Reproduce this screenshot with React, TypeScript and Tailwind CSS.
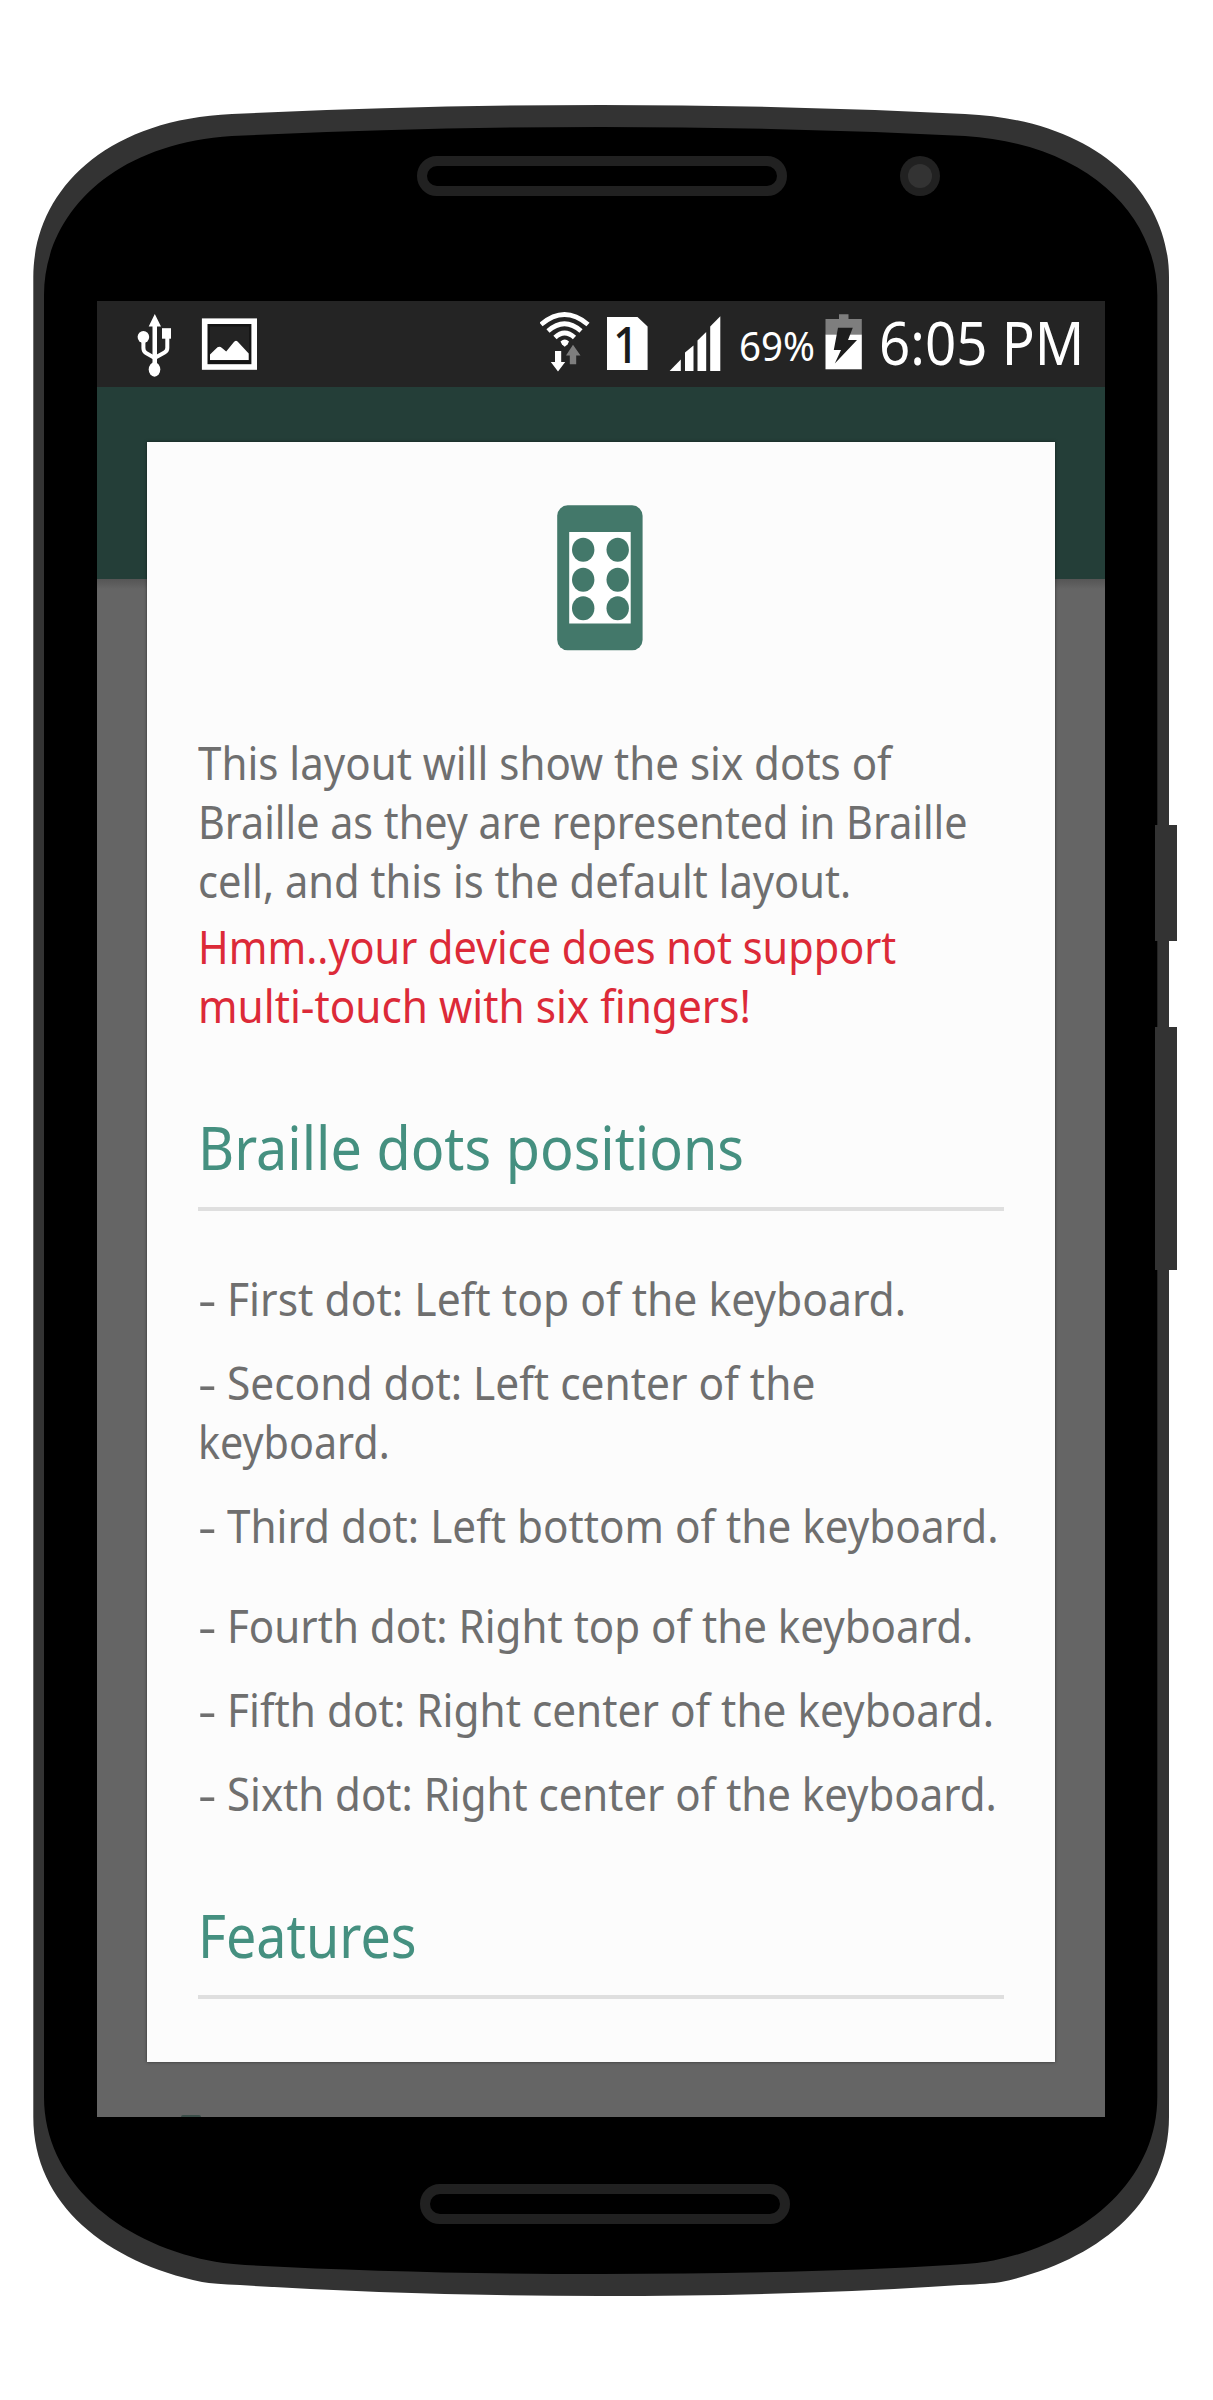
import { useLayoutEffect, useRef, type ReactNode } from "react";

/** One line of text condensed horizontally to a given width. */
function Line({ width, className = "", children }: { width: number; className?: string; children: ReactNode }) {
  const ref = useRef<HTMLSpanElement>(null);
  useLayoutEffect(() => {
    const el = ref.current;
    if (el) el.style.transform = `scaleX(${width / el.offsetWidth})`;
  }, [width]);
  return (
    <div className={className} style={{ width }}>
      <span ref={ref} className="inline-block origin-left whitespace-nowrap align-top">
        {children}
      </span>
    </div>
  );
}

/** A list line led by a wide dash. */
function Item({ width, className = "", children }: { width: number; className?: string; children: ReactNode }) {
  return (
    <div className={`flex ${className}`}>
      <span className="w-[28.500px] shrink-0">
        <span className="inline-block origin-left scale-x-[1.25] align-top">-</span>
      </span>
      <Line width={width}>{children}</Line>
    </div>
  );
}

function PhoneBody() {
  return (
    <svg className="absolute left-0 top-0" width="1213" height="2400" viewBox="0 0 1213 2400" aria-hidden="true">
      <path
        fill="#333333"
        d="M33.3 277C33.3 195 100 120 232 114Q420 105 601 105Q780 105 965 114C1099 120 1169 195 1169 277V2117C1169 2205 1095 2262 1001 2282Q990 2284 960 2285Q800 2296 601 2296Q410 2296 240 2285Q214 2284 202 2282C107 2262 33.3 2205 33.3 2117Z"
      />
      <path
        fill="#000000"
        d="M44 295C44 218 108 144 232 136Q420 127 601 127Q780 127 965 136C1091 144 1157.300 218 1157.300 295V2097C1157.300 2180 1085 2242 993.500 2260.500Q982 2263 950 2265Q800 2274 601 2274Q410 2274 245 2265Q220 2263 209 2260.500C117 2242 44 2180 44 2097Z"
      />
      <rect x="422" y="161" width="360" height="30" rx="15" fill="none" stroke="#212121" strokeWidth="10" />
      <rect x="425" y="2189" width="360" height="30" rx="15" fill="none" stroke="#212121" strokeWidth="10" />
      <circle cx="920" cy="176" r="20" fill="#212121" />
      <circle cx="920" cy="176" r="12" fill="#333333" />
      <rect x="1155" y="825" width="22" height="116" fill="#333333" />
      <rect x="1155" y="1027" width="22" height="243" fill="#333333" />
    </svg>
  );
}

function UsbIcon() {
  return (
    <svg className="ml-[39px] shrink-0" width="38" height="66" viewBox="136 312 38 66" fill="#fff">
      <path d="M154.800 314L161 326.500H157V364H152.500V326.500H148.700Z" />
      <ellipse cx="154.500" cy="369.500" rx="5.800" ry="7.200" />
      <ellipse cx="143.400" cy="337" rx="5.800" ry="6" />
      <rect x="162" y="328.200" width="9" height="10.500" />
      <path d="M143.400 340V348Q143.400 351.500 146 353L154.700 358L164.500 352.500Q167.300 351 167.300 348V337" fill="none" stroke="#fff" strokeWidth="4" />
    </svg>
  );
}

function PictureIcon() {
  return (
    <svg className="ml-[27px] shrink-0" width="56" height="54" viewBox="201 317 56 54">
      <rect x="204.700" y="321.200" width="49.500" height="45.800" fill="#151515" stroke="#fff" strokeWidth="5.600" />
      <rect x="210" y="326.500" width="39" height="34" fill="#232323" />
      <path d="M210 360V354.500L217.500 347.300Q219.700 345.700 222 348L226.200 351.500L233.500 342.500Q236 339 238.500 342.500L248.700 353.500V360Z" fill="#fff" />
    </svg>
  );
}

function WifiIcon() {
  return (
    <svg className="ml-[283px] shrink-0" width="50" height="62" viewBox="540 311 50 62">
      <g fill="none" stroke="#fff" strokeWidth="4.800">
        <path d="M541 324.500Q564.500 304.500 588 324.500" />
        <path d="M548 331Q564.500 316.500 581 331" />
        <path d="M555 337.500Q564.500 328.500 574.500 337.500" />
      </g>
      <path d="M560.500 341.500Q564.700 337.500 569 341.500L567.500 344.500L564.700 346.800L562 344.500Z" fill="#fff" />
      <path d="M555 351H561.200V362H565.200L558 371.500L550.800 362H555Z" fill="#fff" />
      <path d="M569.800 364.200H576.200V355.500H580.500L573 344.800L566 355.500H569.800Z" fill="#7e7e7e" />
    </svg>
  );
}

function SimIcon() {
  return (
    <div className="relative ml-[17px] h-[53px] w-[41px] shrink-0">
      <svg className="absolute inset-0" width="41" height="53" viewBox="0 0 41 53">
        <path d="M0 0H30.500L40.600 9.500V53H0Z" fill="#fff" />
      </svg>
      <span className="absolute left-[6px] top-0 inline-block origin-left scale-x-[0.9] text-[50px] font-medium leading-[54px] text-[#1b1b1b]">1</span>
    </div>
  );
}

function SignalIcon() {
  return (
    <svg className="ml-[21px] shrink-0" width="52" height="56" viewBox="669 316 52 56" fill="#fff">
      <path d="M669.600 371L680.800 359.500V371Z" />
      <path d="M685 371V352.500L693.500 345.500V371Z" />
      <path d="M697.500 371V340.500L706.200 332V371Z" />
      <path d="M710.200 371V326.500L720.300 316.300V371Z" />
    </svg>
  );
}

function BatteryIcon() {
  return (
    <svg className="ml-[10px] shrink-0" width="38" height="56" viewBox="825 314 38 56">
      <path d="M825.500 319H839V314.300H848.500V319H861.800V335H825.500Z" fill="#7e7e7e" />
      <rect x="825.500" y="334.700" width="36.300" height="34.600" fill="#fff" />
      <path d="M838 327.700H852.800L848 340H857L834.800 363.500L841 350H833.800Z" fill="#1d1d1d" />
    </svg>
  );
}

function StatusBar() {
  return (
    <div className="flex h-[86px] shrink-0 items-start bg-[#242424] text-white">
      <div className="flex pt-[11px]"><UsbIcon /></div>
      <div className="flex pt-[16px]"><PictureIcon /></div>
      <div className="flex pt-[10px]"><WifiIcon /></div>
      <div className="flex pt-[16px]"><SimIcon /></div>
      <div className="flex pt-[15px]"><SignalIcon /></div>
      <Line width={76} className="ml-[18px] mt-[21px] text-[40px] leading-[48px]">69%</Line>
      <div className="flex pt-[13px]"><BatteryIcon /></div>
      <Line width={205} className="ml-[16px] mt-[11px] text-[60px] leading-[60px]">6:05 PM</Line>
    </div>
  );
}

function BrailleIcon() {
  return (
    <svg className="ml-[410px] mt-[63px] block" width="86" height="146" viewBox="0 0 86 146" fill="#43786a">
      <rect x="0.200" y="0.300" width="85.400" height="145" rx="10.500" />
      <rect x="12.200" y="27" width="61.500" height="91.500" fill="#fff" />
      {[44.7, 74.7, 103.3].map((y) => (
        <g key={y}>
          <ellipse cx="26.200" cy={y} rx="11.200" ry="12" />
          <ellipse cx="60.700" cy={y} rx="11.200" ry="12" />
        </g>
      ))}
    </svg>
  );
}

function Dialog() {
  return (
    <div className="absolute left-[50px] top-[55px] h-[1620px] w-[907.500px] overflow-hidden bg-[#fcfcfc] pl-[51px] text-[46px] leading-[59px] text-[#6f6f6f] shadow-[0_0_3px_rgba(0,0,0,0.5)]">
      <div className="-ml-[51px]"><BrailleIcon /></div>
      <div className="mt-[82px]">
        <Line width={694}>This layout will show the six dots of</Line>
        <Line width={770}>Braille as they are represented in Braille</Line>
        <Line width={653}>cell, and this is the default layout.</Line>
      </div>
      <div className="mt-[7px] text-[#dc2a38]">
        <Line width={698}>Hmm..your device does not support</Line>
        <Line width={553}>multi-touch with six fingers!</Line>
      </div>
      <Line width={546} className="mt-[82px] text-[60px] leading-[60px] text-[#459080]">Braille dots positions</Line>
      <div className="mt-[30px] h-[4px] w-[806px] bg-[#dfdfdf]" />
      <Item width={679.5} className="mt-[58px]">First dot: Left top of the keyboard.</Item>
      <Item width={588.5} className="mt-[25px]">Second dot: Left center of the</Item>
      <Line width={192}>keyboard.</Line>
      <Item width={771.5} className="mt-[25px]">Third dot: Left bottom of the keyboard.</Item>
      <Item width={746.5} className="mt-[41px]">Fourth dot: Right top of the keyboard.</Item>
      <Item width={767.5} className="mt-[25px]">Fifth dot: Right center of the keyboard.</Item>
      <Item width={769.5} className="mt-[25px]">Sixth dot: Right center of the keyboard.</Item>
      <Line width={219} className="mt-[82px] text-[60px] leading-[60px] text-[#459080]">Features</Line>
      <div className="mt-[30px] h-[4px] w-[806px] bg-[#dfdfdf]" />
    </div>
  );
}

export default function App() {
  return (
    <div className="relative h-[2400px] w-[1213px] overflow-hidden bg-white pl-[97px] pt-[301px] font-['Noto_Sans',sans-serif]">
      <PhoneBody />
      <div className="relative flex h-[1816px] w-[1008px] flex-col overflow-hidden bg-[#656565]">
        <StatusBar />
        <div className="relative flex-1">
          <div className="h-[192px] bg-[#243e38]" />
          <div className="h-[10px] bg-linear-to-b from-[#555555] to-[#656565]" />
          <Dialog />
          <div className="absolute bottom-0 left-[84px] h-[2px] w-[20px] rounded-t-full bg-[#3a4d48]" />
        </div>
      </div>
    </div>
  );
}
